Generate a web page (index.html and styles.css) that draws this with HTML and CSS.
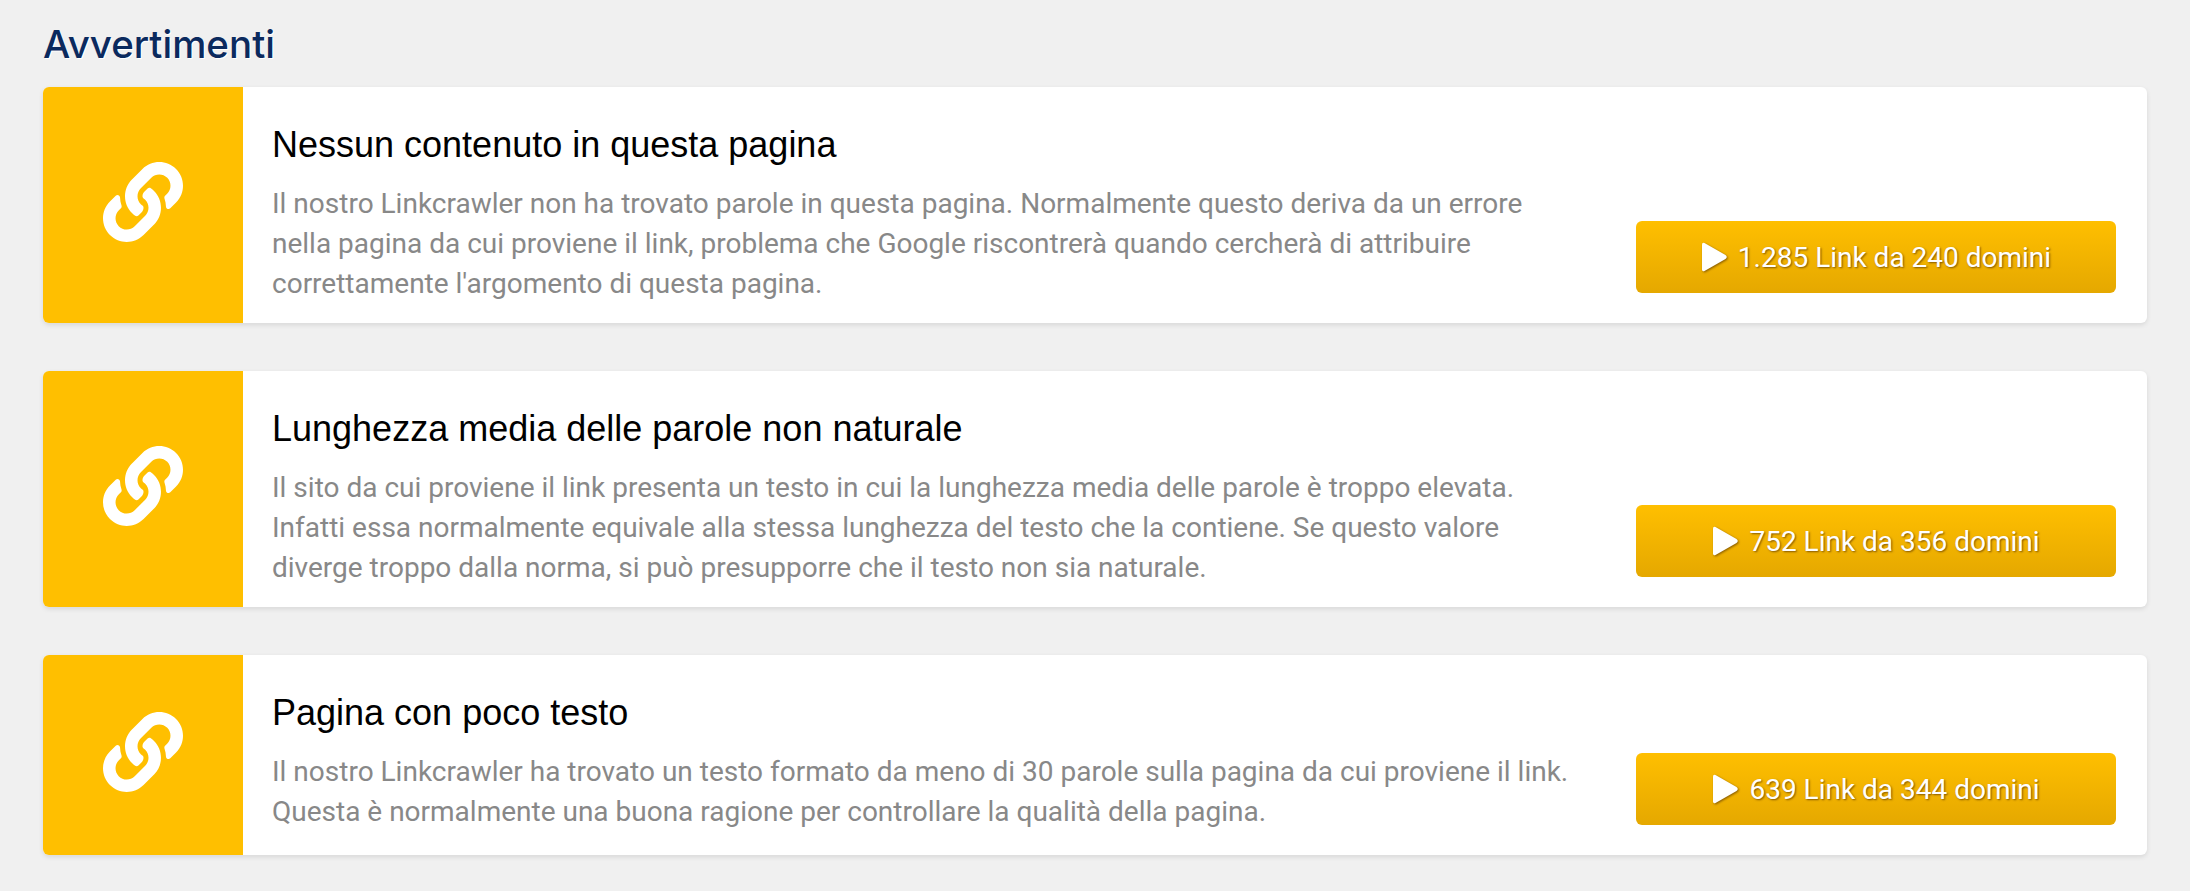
FILE: index.html
```html
<!DOCTYPE html>
<html lang="it">
<head>
<meta charset="UTF-8">
<title>Avvertimenti</title>
<link rel="stylesheet" href="styles.css">
</head>
<body>
<svg class="defs" width="0" height="0">
<symbol id="link-icon" viewBox="0 0 512 512">
<path d="M326.612 185.391c59.747 59.809 58.927 155.698.36 214.59-.11.12-.24.25-.36.37l-67.2 67.2c-59.27 59.27-155.699 59.262-214.96 0-59.27-59.26-59.27-155.7 0-214.96l37.106-37.106c9.84-9.84 26.786-3.3 27.294 10.606.648 17.722 3.826 35.527 9.69 52.721 1.986 5.822.567 12.262-3.783 16.612l-13.087 13.087c-28.026 28.026-28.905 73.66-1.155 101.96 28.024 28.579 74.086 28.749 102.325.51l67.2-67.19c28.191-28.191 28.073-73.757 0-101.83-3.701-3.694-7.429-6.564-10.341-8.569a16.037 16.037 0 0 1-6.947-12.606c-.396-10.567 3.348-21.456 11.698-29.806l21.054-21.055c5.521-5.521 14.182-6.199 20.584-1.731a152.482 152.482 0 0 1 20.522 17.197zM467.547 44.449c-59.261-59.262-155.69-59.27-214.96 0l-67.2 67.2c-.12.12-.25.25-.36.37-58.566 58.892-59.387 154.781.36 214.59a152.454 152.454 0 0 0 20.521 17.196c6.402 4.468 15.064 3.789 20.584-1.731l21.054-21.055c8.35-8.35 12.094-19.239 11.698-29.806a16.037 16.037 0 0 0-6.947-12.606c-2.912-2.005-6.64-4.875-10.341-8.569-28.073-28.073-28.191-73.639 0-101.83l67.2-67.19c28.239-28.239 74.3-28.069 102.325.51 27.75 28.3 26.872 73.934-1.155 101.96l-13.087 13.087c-4.35 4.35-5.769 10.79-3.783 16.612 5.864 17.194 9.042 34.999 9.69 52.721.509 13.906 17.454 20.446 27.294 10.606l37.106-37.106c59.271-59.259 59.271-155.699.001-214.959z"/>
</symbol>
<symbol id="play-icon" viewBox="0 0 26 30">
<path d="M3.5 1 L24.5 13 Q27 15 24.5 17 L3.5 29 Q1 30 1 27.5 L1 2.5 Q1 0 3.5 1 Z"/>
</symbol>
</svg>

<h1 class="title">Avvertimenti</h1>

<div class="warning">
<div class="warning-icon"><svg><use href="#link-icon"/></svg></div>
<div class="warning-text">
<h2>Nessun contenuto in questa pagina</h2>
<p>Il nostro Linkcrawler non ha trovato parole in questa pagina. Normalmente questo deriva da un errore<br>nella pagina da cui proviene il link, problema che Google riscontrerà quando cercherà di attribuire<br>correttamente l'argomento di questa pagina.</p>
</div>
<div class="warning-action">
<a class="btn" href="#"><svg class="play"><use href="#play-icon"/></svg>1.285 Link da 240 domini</a>
</div>
</div>

<div class="warning">
<div class="warning-icon"><svg><use href="#link-icon"/></svg></div>
<div class="warning-text">
<h2>Lunghezza media delle parole non naturale</h2>
<p>Il sito da cui proviene il link presenta un testo in cui la lunghezza media delle parole è troppo elevata.<br>Infatti essa normalmente equivale alla stessa lunghezza del testo che la contiene. Se questo valore<br>diverge troppo dalla norma, si può presupporre che il testo non sia naturale.</p>
</div>
<div class="warning-action">
<a class="btn" href="#"><svg class="play"><use href="#play-icon"/></svg>752 Link da 356 domini</a>
</div>
</div>

<div class="warning">
<div class="warning-icon"><svg><use href="#link-icon"/></svg></div>
<div class="warning-text">
<h2>Pagina con poco testo</h2>
<p>Il nostro Linkcrawler ha trovato un testo formato da meno di 30 parole sulla pagina da cui proviene il link.<br>Questa è normalmente una buona ragione per controllare la qualità della pagina.</p>
</div>
<div class="warning-action">
<a class="btn" href="#"><svg class="play"><use href="#play-icon"/></svg>639 Link da 344 domini</a>
</div>
</div>
</body>
</html>
```
FILE: styles.css
```css
body {
  margin: 0;
  padding: 19px 43px 36px;
  background: #f0f0f0;
  font-family: Roboto, sans-serif;
}

.defs {
  display: block;
  height: 0;
}

.title {
  margin: 0 0 18px;
  font-family: Inter, sans-serif;
  font-size: 38.5px;
  line-height: 50px;
  font-weight: 500;
  color: #0b2a5e;
  text-shadow: 1px 1px 0 #fff;
}

/* cards */
.warning {
  display: flex;
  min-height: 200px;
  margin-bottom: 48px;
  background: #fff;
  border-radius: 6px;
  overflow: hidden;
  box-shadow: 0 2px 5px rgba(0,0,0,0.1);
}

.warning:last-child {
  margin-bottom: 0;
}

.warning-icon {
  flex: 0 0 200px;
  display: flex;
  align-items: center;
  justify-content: center;
  padding-bottom: 7px;
  background: #ffbf00;
}

.warning-icon svg {
  width: 80px;
  height: 80px;
  fill: #fff;
}

.warning-text {
  flex: 1;
  padding: 36px 0 19px 29px;
}

.warning-text h2 {
  margin: 0 0 17px;
  font-family: "Liberation Sans", Arial, sans-serif;
  font-size: 36px;
  line-height: 44px;
  font-weight: 400;
  color: #000;
}

.warning-text p {
  margin: 0;
  font-size: 28px;
  line-height: 40px;
  color: #888;
}

.warning-action {
  display: flex;
  align-items: flex-end;
  padding: 0 31px 30px 0;
}

.btn {
  display: flex;
  align-items: center;
  justify-content: center;
  width: 480px;
  height: 72px;
  border-radius: 6px;
  background: linear-gradient(#ffbf00, #e5a800);
  color: #fff;
  font-size: 28px;
  text-decoration: none;
  text-shadow: 1px 1px 2px rgba(110,70,0,0.85);
}

.play {
  width: 26px;
  height: 30px;
  margin-right: 11px;
  fill: #fff;
  filter: drop-shadow(1px 1px 1px rgba(110,70,0,0.8));
}
```
